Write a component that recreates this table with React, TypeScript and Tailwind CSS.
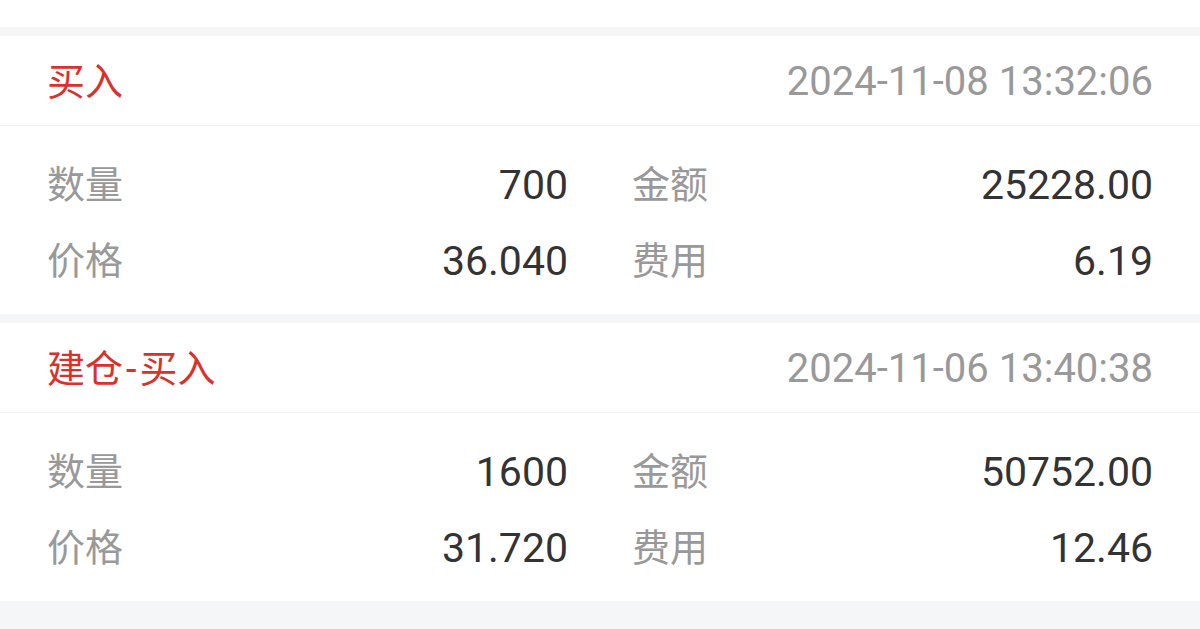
import React from 'react';

interface Trade {
  type: string;
  time: string;
  qty: string;
  amount: string;
  price: string;
  fee: string;
}

const trades: Trade[] = [
  { type: '买入', time: '2024-11-08 13:32:06', qty: '700', amount: '25228.00', price: '36.040', fee: '6.19' },
  { type: '建仓-买入', time: '2024-11-06 13:40:38', qty: '1600', amount: '50752.00', price: '31.720', fee: '12.46' },
];

const Cell: React.FC<{ label: string; value: string }> = ({ label, value }) => (
  <div className="flex items-center justify-between h-[76px]">
    <span className="text-[38px] text-[#999999]">{label}</span>
    <span className="text-[41px] text-[#333333]">{value}</span>
  </div>
);

const TradeCard: React.FC<{ trade: Trade }> = ({ trade }) => {
  const parts = trade.type.split('-');
  return (
    <div className="bg-white">
      <div className="h-[90px] pt-[3px] px-[47px] flex items-center justify-between border-b border-[#f2f2f2]">
        <span className="text-[38px] text-[#d8322b]">
          {parts.map((p, i) => (
            <React.Fragment key={i}>
              {i > 0 && <span className="px-[3px]">-</span>}
              {p}
            </React.Fragment>
          ))}
        </span>
        <span className="text-[40px] text-[#999999]">{trade.time}</span>
      </div>
      <div className="px-[47px] pt-[21px] pb-[15px] grid grid-cols-2 gap-x-[64px]">
        <Cell label="数量" value={trade.qty} />
        <Cell label="金额" value={trade.amount} />
        <Cell label="价格" value={trade.price} />
        <Cell label="费用" value={trade.fee} />
      </div>
    </div>
  );
};

export default function App() {
  return (
    <div className="h-[629px] overflow-hidden bg-[#f5f6f8] flex flex-col gap-[9px] font-['Roboto','Noto_Sans_CJK_SC',sans-serif] leading-none">
      <div className="h-[27px] bg-white" />
      {trades.map(t => (
        <TradeCard key={t.time} trade={t} />
      ))}
    </div>
  );
}
